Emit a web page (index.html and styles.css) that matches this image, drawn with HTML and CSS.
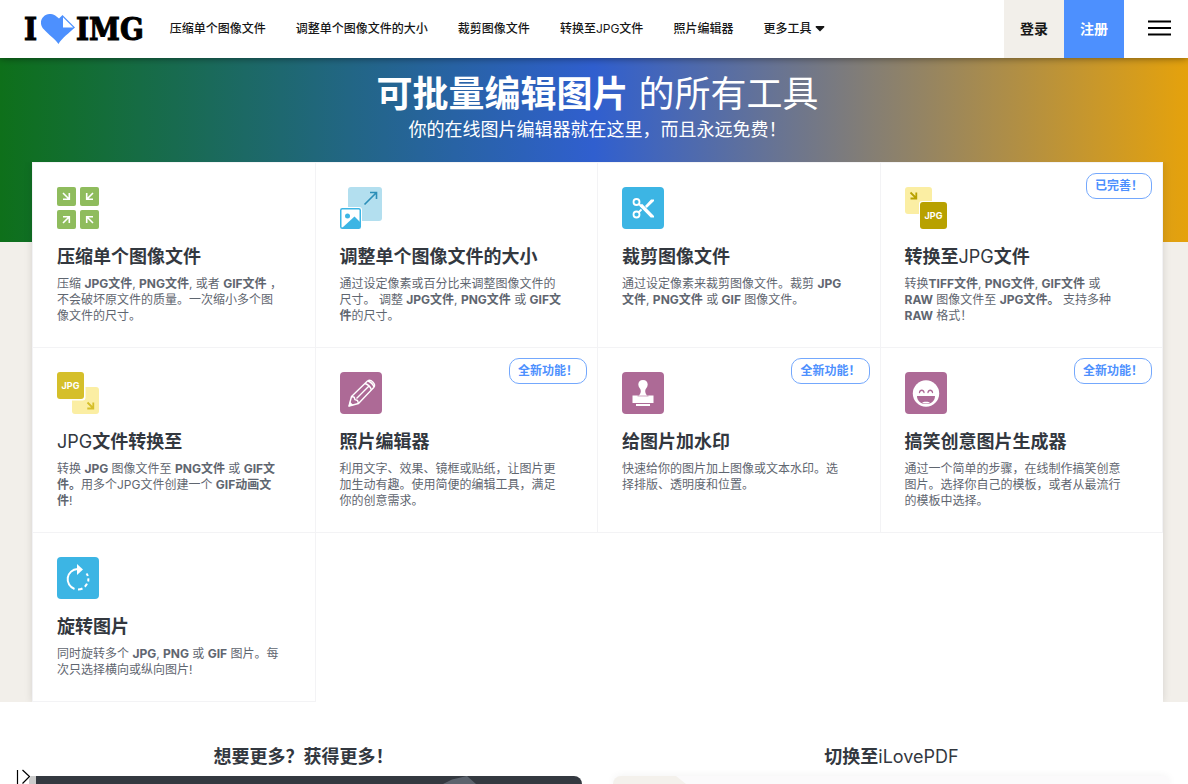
FILE: index.html
```html
<!DOCTYPE html>
<html lang="zh-CN">
<head>
<meta charset="utf-8">
<meta name="viewport" content="width=device-width, initial-scale=1">
<title>iLoveIMG</title>
<link rel="stylesheet" href="styles.css">
</head>
<body>
<header class="header">
  <a class="logo" href="#" aria-label="iLoveIMG">
    <span>I</span>
    <svg class="logo-heart" width="34" height="30" viewBox="0 0 34 30" aria-hidden="true">
      <path fill="#4d90fe" d="M17.500 30C15 26 8 21 3 15.500-1 11.500-1 6 2.500 2.700 6-.9 12-.9 15.500 2.500L18 4.500 21.500 1 34 13.500C29 18 20 25 17.500 30Z"/>
      <path fill="#fff" d="M22 3.200V13.500H32.300Z"/>
    </svg>
    <span>IMG</span>
  </a>
  <nav class="nav">
    <a href="#">压缩单个图像文件</a>
    <a href="#">调整单个图像文件的大小</a>
    <a href="#">裁剪图像文件</a>
    <a href="#">转换至<span class="light">JPG</span>文件</a>
    <a href="#">照片编辑器</a>
    <a class="more" href="#">更多工具<svg width="10" height="6" viewBox="0 0 10 6" aria-hidden="true"><path fill="#161616" d="M1 0h8l.5 1L5 5.500.5 1Z"/></svg></a>
  </nav>
  <div class="actions">
    <a class="login" href="#">登录</a>
    <a class="signup" href="#">注册</a>
    <button class="menu" type="button" aria-label="菜单">
      <svg width="24" height="16" viewBox="0 0 24 16" aria-hidden="true"><path stroke="#000" stroke-width="2" d="M0 1.500h23M0 8h23M0 14.500h23"/></svg>
    </button>
  </div>
</header>

<main>
  <section class="hero">
    <h1><strong>可批量编辑图片</strong> 的所有工具</h1>
    <p>你的在线图片编辑器就在这里，而且永远免费！</p>
  </section>

  <section class="tools">
    <div class="grid">
      <article class="tool">
        <svg class="icon" viewBox="0 0 42 42" aria-hidden="true">
          <g fill="#8fbc5d"><rect width="19" height="19" rx="2"/><rect x="23" width="19" height="19" rx="2"/><rect y="23" width="19" height="19" rx="2"/><rect x="23" y="23" width="19" height="19" rx="2"/></g>
          <path fill="none" stroke="#fff" stroke-width="1.600" d="M6 6l6 6M12.300 6v6.300H6M36 6l-6 6M29.700 6v6.300H36M6 36l6-6M6 29.700h6.300V36M36 36l-6-6M36 29.700h-6.300V36"/>
        </svg>
        <h2>压缩单个图像文件</h2>
        <p>压缩 <b>JPG文件</b>, <b>PNG文件</b>, 或者 <b>GIF文件</b> ，<br>不会破坏原文件的质量。一次缩小多个图<br>像文件的尺寸。</p>
      </article>
      <article class="tool">
        <svg class="icon" viewBox="0 0 42 42" aria-hidden="true">
          <rect x="8" width="34" height="34" rx="3" fill="#b3dfef"/>
          <path fill="none" stroke="#2c8fb8" stroke-width="1.600" d="M24.500 17.500 36 6M30 5.500h6.500V12"/>
          <path fill="#fff" d="M0 20h19a3 3 0 0 1 3 3v19H0Z"/>
          <rect x=".75" y="21.750" width="19.500" height="19.500" rx="1.500" fill="#fff" stroke="#3cb5e4" stroke-width="1.500"/>
          <circle cx="7.500" cy="29" r="2.500" fill="#3cb5e4"/>
          <path fill="#3cb5e4" d="M2 41 14.500 29.500 20 35v6Z"/>
        </svg>
        <h2>调整单个图像文件的大小</h2>
        <p>通过设定像素或百分比来调整图像文件的<br>尺寸。 调整 <b>JPG文件</b>, <b>PNG文件</b> 或 <b>GIF文<br>件</b>的尺寸。</p>
      </article>
      <article class="tool">
        <svg class="icon" viewBox="0 0 42 42" aria-hidden="true">
          <rect width="42" height="42" rx="4" fill="#3cb5e4"/>
          <g fill="none" stroke="#fff"><circle cx="14.500" cy="15" r="3" stroke-width="1.800"/><circle cx="14.500" cy="27.500" r="3" stroke-width="1.800"/><path stroke-width="1.800" d="M16.500 25.500 19.500 22.500M17 17l3.500 3.500"/></g>
          <path fill="#fff" d="M17.500 19 20 16.800 32 29v1.500h-3.300Zm5.500 0 6-6.500h3V14l-7.200 7Z"/>
        </svg>
        <h2>裁剪图像文件</h2>
        <p>通过设定像素来裁剪图像文件。裁剪 <b>JPG<br>文件</b>, <b>PNG文件</b> 或 <b>GIF</b> 图像文件。</p>
      </article>
      <article class="tool">
        <span class="badge">已完善！</span>
        <svg class="icon" viewBox="0 0 42 42" aria-hidden="true">
          <rect width="27" height="27" rx="3" fill="#fbeea3"/>
          <path fill="none" stroke="#b8a100" stroke-width="1.800" d="M5.500 5.500l5.500 5.500M11.300 5.500v6H5.500"/>
          <rect x="14" y="14" width="29" height="29" rx="3" fill="#fff"/>
          <rect x="15" y="15" width="27" height="27" rx="3" fill="#b8a100"/>
          <text class="icon-text" x="28.500" y="31.500">JPG</text>
        </svg>
        <h2>转换至<span class="light">JPG</span>文件</h2>
        <p>转换<b>TIFF文件</b>, <b>PNG文件</b>, <b>GIF文件</b> 或<br><b>RAW</b> 图像文件至 <b>JPG文件。</b> 支持多种<br><b>RAW</b> 格式！</p>
      </article>
      <article class="tool">
        <svg class="icon" viewBox="0 0 42 42" aria-hidden="true">
          <rect x="15" y="15" width="27" height="27" rx="3" fill="#fbeea3"/>
          <path fill="none" stroke="#d5bf2a" stroke-width="1.800" d="M30.500 30.500l5.500 5.500M36.300 30.500v6h-6"/>
          <rect x="-1" y="-1" width="29.500" height="29.500" rx="3" fill="#fff"/>
          <rect width="27" height="27" rx="3" fill="#d5bf2a"/>
          <text class="icon-text" x="13.500" y="17">JPG</text>
        </svg>
        <h2><span class="light">JPG</span>文件转换至</h2>
        <p>转换 <b>JPG</b> 图像文件至 <b>PNG文件</b> 或 <b>GIF文<br>件。</b>用多个JPG文件创建一个 <b>GIF动画文<br>件</b>!</p>
      </article>
      <article class="tool">
        <span class="badge">全新功能！</span>
        <svg class="icon" viewBox="0 0 42 42" aria-hidden="true">
          <rect width="42" height="42" rx="4" fill="#ad6a96"/>
          <g fill="none" stroke="#fff" stroke-width="1.400" stroke-linejoin="round"><path d="M9 34l2.500-9.500L27.500 9c1.500-1 3.500-.8 5.300 1s2.200 4 .9 5.500L18.500 31.500Z"/><path d="M25 11.500c3 1 5.500 3.500 6.500 6.500M28 9c2.800 1 5 3.200 6 6M11.500 24.500l2.700.7.800 2.500 2.500.8 1 3M16.500 26.500 28.500 14.500"/></g>
          <path fill="#fff" d="m8.500 34.500 1.300-5 3.700 3.700Z"/>
        </svg>
        <h2>照片编辑器</h2>
        <p>利用文字、效果、镜框或贴纸，让图片更<br>加生动有趣。使用简便的编辑工具，满足<br>你的创意需求。</p>
      </article>
      <article class="tool">
        <span class="badge">全新功能！</span>
        <svg class="icon" viewBox="0 0 42 42" aria-hidden="true">
          <rect width="42" height="42" rx="4" fill="#ad6a96"/>
          <path fill="#fff" d="M21 8c3 0 4.700 2 4.700 4.500 0 3-2.500 4-2.500 6.500 0 2 .8 3 1.800 4.500h6.500V31h-21v-7.500H17c1-1.500 1.800-2.500 1.800-4.500 0-2.500-2.500-3.500-2.500-6.500C16.300 10 18 8 21 8ZM14 32h14v2H14Z"/>
          <path stroke="#ad6a96" stroke-width=".6" d="M15.500 24h11"/>
        </svg>
        <h2>给图片加水印</h2>
        <p>快速给你的图片加上图像或文本水印。选<br>择排版、透明度和位置。</p>
      </article>
      <article class="tool">
        <span class="badge">全新功能！</span>
        <svg class="icon" viewBox="0 0 42 42" aria-hidden="true">
          <rect width="42" height="42" rx="4" fill="#ad6a96"/>
          <circle cx="21" cy="21.500" r="13.200" fill="#fff"/>
          <path fill="none" stroke="#ad6a96" stroke-width="1.300" stroke-linecap="round" d="M14.500 20.500c.5-3 4-3 4.500 0M23 20.500c.5-3 4-3 4.500 0"/>
          <path fill="#ad6a96" d="M12 24h18c0 4.500-3.500 8-9 8s-9-3.500-9-8Z"/>
          <path fill="#fff" d="M17 30.800c1-1.500 7-1.500 8 0-2 .8-6 .8-8 0Z"/>
        </svg>
        <h2>搞笑创意图片生成器</h2>
        <p>通过一个简单的步骤，在线制作搞笑创意<br>图片。选择你自己的模板，或者从最流行<br>的模板中选择。</p>
      </article>
      <article class="tool">
        <svg class="icon" viewBox="0 0 42 42" aria-hidden="true">
          <rect width="42" height="42" rx="4" fill="#3cb5e4"/>
          <g fill="none" stroke="#fff" stroke-width="2"><path d="M20.500 12A10.300 10.300 0 0 0 17.500 32"/><path d="M21 32.500c1.600 0 3-.3 4.500-1M27.800 29.700c1-.9 1.700-1.800 2.200-3M31.200 24.500c.2-1 .2-2 .1-3.200M30.800 19c-.3-.9-.7-1.700-1.300-2.500"/></g>
          <path fill="#fff" d="m20 7 6 5.500-6 5.500Z"/>
        </svg>
        <h2>旋转图片</h2>
        <p>同时旋转多个 <b>JPG</b>, <b>PNG</b> 或 <b>GIF</b> 图片。每<br>次只选择横向或纵向图片!</p>
      </article>
    </div>
  </section>

  <section class="promos">
    <div class="promo">
      <h3>想要更多？获得更多！</h3>
      <div class="panel dark">
        <svg width="36" height="8" viewBox="0 0 36 8" aria-hidden="true"><path fill="#5c636d" d="M0 8 9 3.500 24 0l9 8Z"/></svg>
      </div>
    </div>
    <div class="promo">
      <h3>切换至<span class="light">iLovePDF</span></h3>
      <div class="panel pale">
        <svg width="74" height="8" viewBox="0 0 74 8" aria-hidden="true"><path fill="#f4f1ec" d="M0 0h63l10 8H0Z"/></svg>
      </div>
    </div>
  </section>
</main>

<button class="expander" type="button" aria-label="展开">
  <svg width="20" height="16" viewBox="0 0 20 16" aria-hidden="true"><path fill="#fff" d="M0 0h14v16H0Z"/><path fill="#ccc" d="M13 8h7v8h-7Z"/><path fill="#fff" d="M6 0h4l5 8-5 8H6Z"/><path fill="none" stroke="#000" stroke-width="1.200" d="M1.500 2v14M6.500 2l7 6.500-7 7"/></svg>
</button>
</body>
</html>
```

FILE: styles.css
```css
* {
  box-sizing: border-box;
}

body {
  display: flex;
  flex-direction: column;
  min-height: 100vh;
  margin: 0;
  background: #fff;
  color: #33383f;
  font-family: Inter, "Noto Sans CJK SC", sans-serif;
}

a {
  color: inherit;
  text-decoration: none;
}

h1, h2, h3, p {
  margin: 0;
}

button {
  padding: 0;
  border: 0;
  background: none;
  cursor: pointer;
}

.light {
  font-weight: 400;
}

.header {
  position: relative;
  z-index: 1;
  display: flex;
  align-items: center;
  height: 58px;
  padding-left: 24px;
  background: #fff;
  box-shadow: 0 0 8px rgba(0, 0, 0, 0.5);
  color: #161616;
}

.logo {
  display: flex;
  align-items: center;
  color: #000;
  font: 700 31px/30px "DejaVu Serif Condensed", "DejaVu Serif", serif;
  -webkit-text-stroke: 1px #000;
}

.logo-heart {
  margin: 0 1px 0 4px;
}

.nav {
  display: flex;
  gap: 30px;
  margin-left: 26px;
  font-size: 12px;
  font-weight: 500;
  line-height: 18px;
  white-space: nowrap;
}

.more {
  display: flex;
  align-items: center;
  gap: 4px;
}

.actions {
  display: flex;
  align-self: stretch;
  margin-left: auto;
  font-size: 14px;
  font-weight: 700;
}

.login,
.signup {
  display: flex;
  align-items: center;
  padding: 0 16px 2px;
}

.login {
  background: #f2efea;
}

.signup {
  background: #4d90fe;
  color: #fff;
}

.menu {
  width: 64px;
  padding-left: 7px;
}

main {
  display: flex;
  flex: 1;
  flex-direction: column;
}

.hero {
  padding: 13px 25px 99px 32px;
  background: linear-gradient(90deg, #0e701a, #305fcf 50%, #e5a20c);
  color: #fff;
  text-align: center;
}

.hero h1 {
  font-size: 36px;
  font-weight: 400;
  line-height: 46px;
}

.hero p {
  font-size: 18px;
  line-height: 26px;
}

.tools {
  padding: 0 25px 0 32px;
  background: #f2efea;
}

.grid {
  display: grid;
  grid-template-columns: repeat(4, 1fr);
  margin-top: -80px;
  border-top: 1px solid #f3f3f5;
  border-left: 1px solid #f3f3f5;
  background: #fff;
  box-shadow: 0 0 8px rgba(0, 0, 0, 0.12);
  clip-path: inset(0 -8px 0 -8px);
}

.tool {
  position: relative;
  padding: 24px 12px 23px 24px;
  border-right: 1px solid #f3f3f5;
  border-bottom: 1px solid #f3f3f5;
}

.icon {
  display: block;
  width: 42px;
  height: 42px;
}

.icon-text {
  fill: #fff;
  font-size: 9px;
  font-weight: 700;
  text-anchor: middle;
}

.tool h2 {
  margin: 16px 0 7px;
  font-size: 18px;
  line-height: 24px;
}

.tool p {
  color: #5f6670;
  font-size: 12px;
  line-height: 16px;
}

.badge {
  position: absolute;
  top: 10px;
  right: 10px;
  padding: 0 8px;
  border: 1px solid #74a8fd;
  border-radius: 10px;
  color: #4d90fe;
  font-size: 12px;
  font-weight: 700;
  line-height: 24px;
}

.promos {
  display: grid;
  flex: 1;
  grid-template-columns: 1fr 1fr;
  gap: 31px;
  padding: 43px 18px 0 25px;
}

.promo {
  display: flex;
  flex-direction: column;
}

.promo h3 {
  margin-bottom: 7px;
  font-size: 18px;
  line-height: 24px;
  text-align: center;
}

.panel {
  flex: 1;
  overflow: hidden;
  border-radius: 10px 10px 0 0;
}

.panel svg {
  display: block;
}

.dark {
  padding-left: 75%;
  background: #343940;
}

.pale {
  background: #fbfafb;
  box-shadow: 0 0 8px rgba(0, 0, 0, 0.06);
}

.expander {
  position: fixed;
  bottom: 0;
  left: 16px;
  height: 16px;
}

.expander svg {
  display: block;
}
```
